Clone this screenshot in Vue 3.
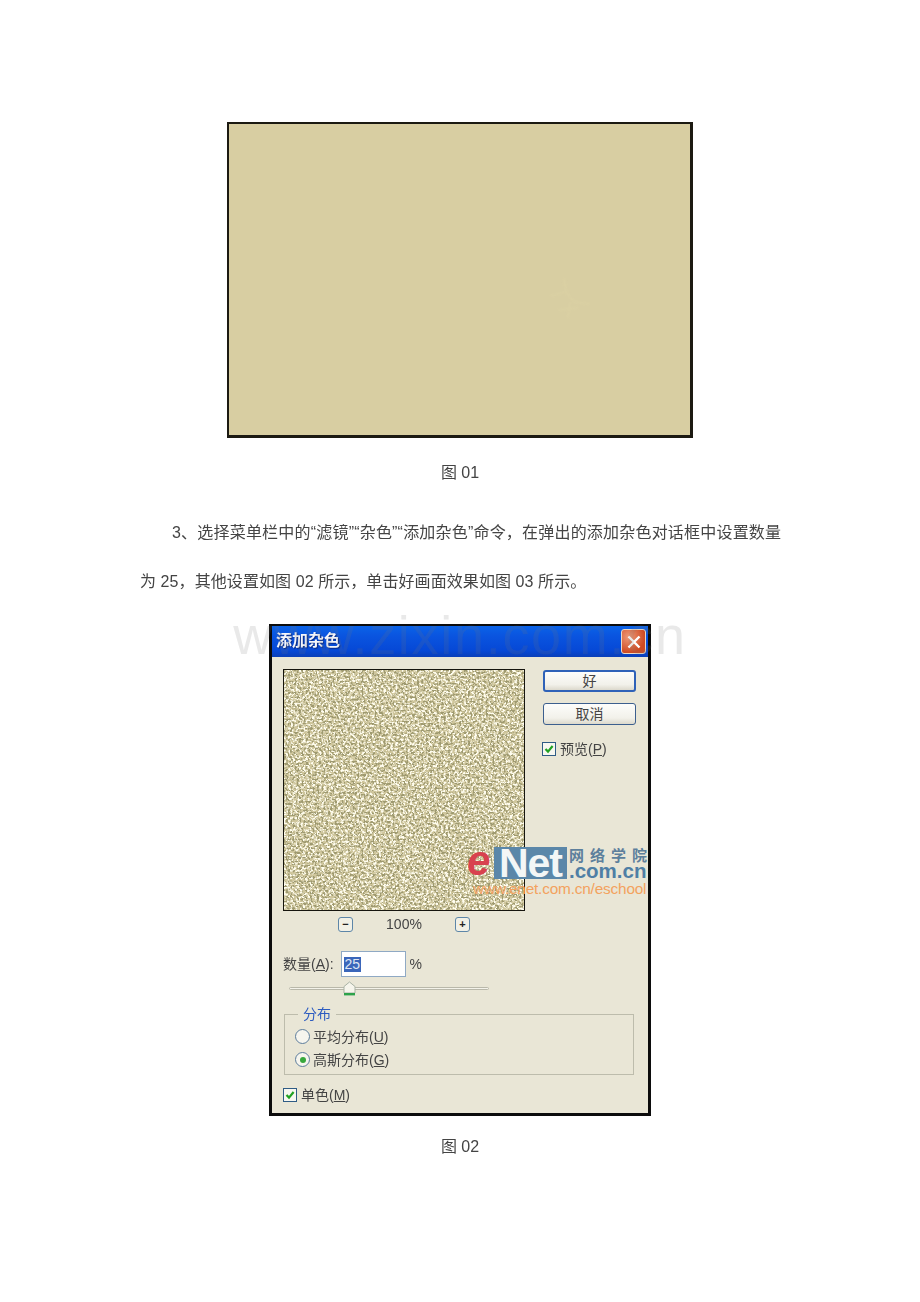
<script setup>
const wm = 'www.zixin.com.cn'
</script>

<template>
  <div class="page">
    <div class="plate">
      <svg class="faint" width="50" height="50" viewBox="0 0 50 50">
        <path d="M20 4 22 18 6 22M22 18 30 28 46 30M14 36 34 34M26 28 24 44" stroke="#e2d8a8" stroke-width="1.5" fill="none"/>
      </svg>
    </div>
    <p class="caption first">图 01</p>
    <p class="para"><span class="indent"></span>3、选择菜单栏中的“滤镜”“杂色”“添加杂色”命令，在弹出的添加杂色对话框中设置数量</p>
    <p class="para second">为 25，其他设置如图 02 所示，单击好画面效果如图 03 所示。</p>

    <div class="dialog">
      <div class="titlebar">
        <span class="title">添加杂色</span>
        <span class="close">
          <svg width="18" height="18" viewBox="0 0 18 18"><path d="M3.5 3.5 14.5 14.5M14.5 3.5 3.5 14.5" stroke="#fff" stroke-width="2.4" fill="none"/></svg>
        </span>
      </div>
      <div class="body">
        <div class="top">
          <div class="left">
            <svg class="noise" width="240" height="240" viewBox="0 0 240 240">
              <filter id="grainLight" x="0" y="0" width="100%" height="100%">
                <feTurbulence type="fractalNoise" baseFrequency="0.42" numOctaves="2" seed="7" />
                <feColorMatrix type="matrix" values="0 0 0 0 1  0 0 0 0 0.98  0 0 0 0 0.86  6 0 0 0 -2.7"/>
              </filter>
              <filter id="grainDark" x="0" y="0" width="100%" height="100%">
                <feTurbulence type="fractalNoise" baseFrequency="0.45" numOctaves="2" seed="23" />
                <feColorMatrix type="matrix" values="0 0 0 0 0.34  0 0 0 0 0.32  0 0 0 0 0.16  7 0 0 0 -3.55"/>
              </filter>
              <rect width="240" height="240" fill="#cfc69c"/>
              <rect width="240" height="240" filter="url(#grainLight)"/>
              <rect width="240" height="240" filter="url(#grainDark)"/>
            </svg>
            <div class="zoomrow">
              <span class="mini">−</span>
              <span class="pct">100%</span>
              <span class="mini">+</span>
            </div>
            <div class="amount">
              <span class="lbl">数量(<u>A</u>):</span>
              <span class="input"><span class="sel">25</span></span>
              <span class="lbl">%</span>
            </div>
            <div class="slider">
              <div class="track"></div>
              <svg class="thumb" width="13" height="15" viewBox="0 0 13 15">
                <path d="M1 5.5 6.5 1 12 5.5V12H1Z" fill="#f6f5ec" stroke="#a9b3a5"/>
                <path d="M1 13.2H12" stroke="#2da24a" stroke-width="2.4"/>
              </svg>
            </div>
          </div>
          <div class="side">
            <button class="btn primary">好</button>
            <button class="btn">取消</button>
            <label class="check preview">
              <span class="box"><svg width="12" height="12" viewBox="0 0 12 12"><path d="M2.5 6 5 8.6 9.6 3" stroke="#21a121" stroke-width="2.2" fill="none"/></svg></span>
              <span class="lbl">预览(<u>P</u>)</span>
            </label>
          </div>
        </div>

        <fieldset class="group">
          <legend>分布</legend>
          <div class="radio"><span class="dot"></span><span class="lbl">平均分布(<u>U</u>)</span></div>
          <div class="radio"><span class="dot on"></span><span class="lbl">高斯分布(<u>G</u>)</span></div>
        </fieldset>

        <label class="check mono">
          <span class="box"><svg width="12" height="12" viewBox="0 0 12 12"><path d="M2.5 6 5 8.6 9.6 3" stroke="#21a121" stroke-width="2.2" fill="none"/></svg></span>
          <span class="lbl">单色(<u>M</u>)</span>
        </label>
      </div>

      <div class="logo">
        <div class="logomark">
          <span class="e">e</span>
          <span class="net">Net</span>
          <span class="logoright">
            <span class="cn">网络学院</span>
            <span class="dom">.com.cn</span>
          </span>
        </div>
        <div class="url">www.enet.com.cn/eschool</div>
      </div>
    </div>

    <p class="caption last">图 02</p>
    <div class="watermark">{{ wm }}</div>
  </div>
</template>

<style scoped>
.page {
  position: relative;
  width: 920px;
  height: 1302px;
  box-sizing: border-box;
  padding-top: 122px;
  background: #fff;
  overflow: hidden;
  font-family: "Liberation Sans", "Noto Sans CJK SC", sans-serif;
  color: #444;
}
p { margin: 0; }
.plate {
  position: relative;
  width: 466px;
  height: 316px;
  box-sizing: border-box;
  margin-left: 227px;
  background: #d8cea2;
  border: 2px solid #1c1a12;
  border-width: 2px 3px 3px 2px;
}
.faint { position: absolute; left: 315px; top: 150px; opacity: 0.35; filter: blur(1px); }
.caption {
  text-align: center;
  font-size: 16px;
  line-height: 24px;
  filter: blur(0.35px);
}
.first { margin-top: 23px; }
.para {
  margin-left: 140px;
  font-size: 16px;
  line-height: 24px;
  letter-spacing: 0.2px;
  white-space: nowrap;
  filter: blur(0.35px);
}
.first + .para { margin-top: 36px; }
.para.second { margin-top: 25px; letter-spacing: 0.08px; }
.indent { display: inline-block; width: 32px; }

.dialog {
  position: relative;
  width: 382px;
  height: 492px;
  box-sizing: border-box;
  margin: 30px 0 0 269px;
  border: 3px solid #0c0c0c;
  border-top-width: 2px;
  background: #e9e6d6;
  display: flex;
  flex-direction: column;
  color: #444;
}
.titlebar {
  height: 31px;
  flex: none;
  display: flex;
  align-items: center;
  justify-content: space-between;
  padding: 0 2px 0 4px;
  background: linear-gradient(180deg, #0a63e8 0%, #0a55e0 30%, #0648d6 80%, #0a3fb8 100%);
}
.title {
  font-size: 16px;
  line-height: 20px;
  margin-top: -1px;
  font-weight: 700;
  color: #f4f6fb;
  text-shadow: 1px 1px 1px #0a2a80;
  filter: blur(0.4px);
}
.close {
  width: 23px;
  height: 23px;
  display: flex;
  align-items: center;
  justify-content: center;
  border-radius: 3px;
  border: 1px solid #e8d8c8;
  background: radial-gradient(circle at 30% 30%, #ee9a78, #cf4a22 70%);
}
.body {
  flex: 1;
  display: flex;
  flex-direction: column;
  padding: 12px 14px 0 11px;
  font-size: 14px;
}
.lbl { font-size: 14px; line-height: 18px; white-space: nowrap; filter: blur(0.35px); }
.top { display: flex; }
.left { width: 260px; flex: none; }
.noise {
  display: block;
  border: 1px solid #16150e;
}
.zoomrow {
  margin-top: 5px;
  margin-left: 55px;
  width: 132px;
  height: 16px;
  display: flex;
  align-items: center;
  justify-content: space-between;
}
.mini {
  width: 13px;
  height: 13px;
  border: 1px solid #5d86a8;
  border-radius: 3px;
  background: #f1f0e6;
  display: flex;
  align-items: center;
  justify-content: center;
  font-size: 11px;
  line-height: 1;
  font-weight: 700;
  color: #222;
}
.pct { font-size: 14px; letter-spacing: 0.1px; filter: blur(0.35px); }
.amount {
  margin-top: 19px;
  display: flex;
  align-items: center;
}
.input {
  width: 61px;
  height: 24px;
  margin: 0 4px 0 7px;
  border: 1px solid #8fa9c4;
  background: #fff;
  display: flex;
  align-items: center;
  padding-left: 2px;
  box-sizing: content-box;
}
.sel {
  background: #3a66ba;
  color: #dfe6f4;
  font-size: 14px;
  line-height: 15px;
  padding: 0 1px;
}
.slider {
  position: relative;
  margin: 3px 0 0 6px;
  width: 200px;
  height: 16px;
}
.track {
  position: absolute;
  top: 7px;
  left: 0;
  right: 0;
  height: 3px;
  background: #f4f3ea;
  border: 1px solid #b9b8aa;
  border-radius: 2px;
  box-sizing: border-box;
}
.thumb {
  position: absolute;
  left: 54px;
  top: 1px;
}
.side {
  display: flex;
  flex-direction: column;
  margin-left: 0;
}
.btn {
  width: 93px;
  height: 22px;
  padding: 0;
  font: 14px/1 "Liberation Sans", "Noto Sans CJK SC", sans-serif;
  color: #444;
  border: 1px solid #3c5f8e;
  border-radius: 3px;
  background: linear-gradient(180deg, #fdfdfb 0%, #f2f1ea 70%, #dcd9cc 100%);
  margin-left: 0;
}
.btn.primary {
  border: 2px solid #2f62b8;
  margin-top: 1px;
  margin-bottom: 11px;
}
.check { display: flex; align-items: center; gap: 4px; }
.preview { margin-top: 15px; margin-left: -1px; }
.box {
  width: 12px;
  height: 12px;
  flex: none;
  border: 1px solid #2f5c85;
  background: #f7f7f0;
  display: block;
}
.box svg { display: block; }
.group {
  margin: 9px 0 0 1px;
  width: 350px;
  height: 70px;
  box-sizing: border-box;
  padding: 2px 0 0 10px;
  border: 1px solid #bdbcac;
  min-width: 0;
}
legend {
  margin-left: 3px;
  padding: 0 5px;
  font-size: 14px;
  line-height: 18px;
  color: #2d5cc0;
  filter: blur(0.35px);
}
.radio {
  display: flex;
  align-items: center;
  gap: 3px;
  height: 23px;
}
.dot {
  width: 13px;
  height: 13px;
  flex: none;
  border: 1px solid #5d7d9c;
  border-radius: 50%;
  background: #f6f5ee;
  display: flex;
  align-items: center;
  justify-content: center;
}
.dot.on::after {
  content: "";
  width: 6px;
  height: 6px;
  border-radius: 50%;
  background: #37a83c;
}
.mono { margin-top: 11px; }

.logo {
  position: absolute;
  left: 195px;
  top: 221px;
  width: 184px;
}
.logomark { display: flex; align-items: stretch; height: 32px; }
.e {
  width: 28px;
  font: italic 700 42px/28px "Liberation Sans", sans-serif;
  color: #d8424f;
}
.net {
  background: #5b87a9;
  color: #f3f6f6;
  width: 73px;
  margin-left: -1px;
  font: 700 41px/32px "Liberation Sans", sans-serif;
  letter-spacing: -1px;
  text-align: center;
}
.logoright { display: flex; flex-direction: column; margin-left: 2px; width: 80px; }
.cn {
  font: 700 15px/16px "Noto Sans CJK SC", sans-serif;
  letter-spacing: 6px;
  color: #5d7f9c;
  white-space: nowrap;
}
.dom {
  font: 700 20.5px/16px "Liberation Sans", sans-serif;
  color: #4f7fa5;
  white-space: nowrap;
}
.url {
  margin-left: 6px;
  font: 400 15.4px/19px "Liberation Sans", sans-serif;
  color: #f3a25e;
  white-space: nowrap;
  letter-spacing: -0.2px;
}

.last { margin-top: 19px; }

.watermark {
  position: absolute;
  left: 0;
  right: 0;
  top: 603px;
  text-align: center;
  font: 400 54px/64px "Liberation Sans", sans-serif;
  letter-spacing: 1.7px;
  color: rgba(120, 120, 120, 0.16);
  pointer-events: none;
}
</style>
